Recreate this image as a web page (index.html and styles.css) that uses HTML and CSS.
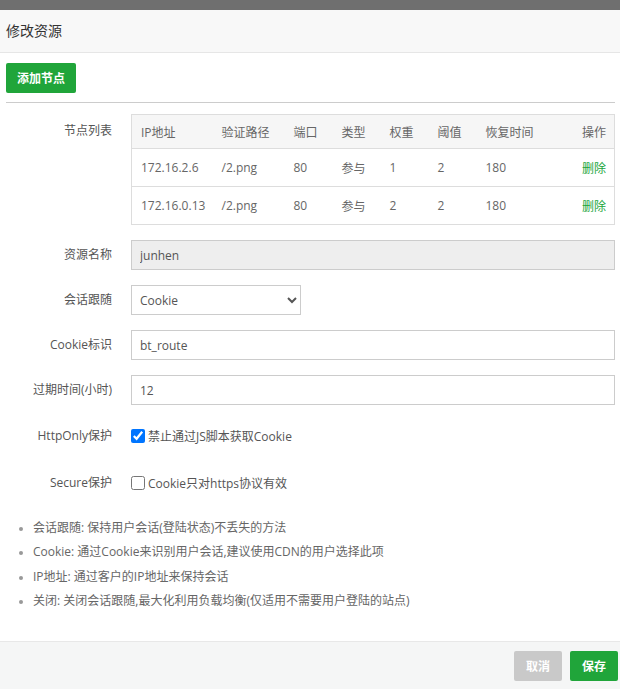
FILE: index.html
```html
<!DOCTYPE html>
<html lang="zh-CN">
<head>
  <meta charset="UTF-8" />
  <meta name="viewport" content="width=device-width, initial-scale=1.0"/>
  <title>修改资源</title>
  <link rel="stylesheet" href="styles.css">
</head>
<body>
  <div class="topbar"></div>
  <div class="dlg-title">修改资源</div>
  <div class="dlg-body">
    <button class="btn btn-green btn-add">添加节点</button>
    <div class="divider"></div>

    <div class="line">
      <span class="tname tname-table">节点列表</span>
      <div class="info-r">
        <table class="node-table">
          <colgroup>
            <col style="width:81px"><col style="width:72px"><col style="width:48px"><col style="width:48px">
            <col style="width:48px"><col style="width:48px"><col style="width:80px"><col>
          </colgroup>
          <thead>
            <tr><th>IP地址</th><th>验证路径</th><th>端口</th><th>类型</th><th>权重</th><th>阈值</th><th>恢复时间</th><th class="op">操作</th></tr>
          </thead>
          <tbody>
            <tr><td>172.16.2.6</td><td>/2.png</td><td>80</td><td>参与</td><td>1</td><td>2</td><td>180</td><td class="op"><a class="del">删除</a></td></tr>
            <tr><td>172.16.0.13</td><td>/2.png</td><td>80</td><td>参与</td><td>2</td><td>2</td><td>180</td><td class="op"><a class="del">删除</a></td></tr>
          </tbody>
        </table>
      </div>
    </div>

    <div class="line">
      <span class="tname">资源名称</span>
      <div class="info-r"><input class="bt-input" type="text" value="junhen" disabled></div>
    </div>

    <div class="line">
      <span class="tname">会话跟随</span>
      <div class="info-r">
        <select class="bt-select">
          <option>Cookie</option>
          <option>IP地址</option>
          <option>关闭</option>
        </select>
      </div>
    </div>

    <div class="line">
      <span class="tname">Cookie标识</span>
      <div class="info-r"><input class="bt-input" type="text" value="bt_route"></div>
    </div>

    <div class="line">
      <span class="tname">过期时间(小时)</span>
      <div class="info-r"><input class="bt-input" type="text" value="12"></div>
    </div>

    <div class="line line-check">
      <span class="tname">HttpOnly保护</span>
      <label class="check"><input type="checkbox" checked> 禁止通过JS脚本获取Cookie</label>
    </div>

    <div class="line line-check">
      <span class="tname">Secure保护</span>
      <label class="check"><input type="checkbox"> Cookie只对https协议有效</label>
    </div>

    <ul class="help">
      <li>会话跟随: 保持用户会话(登陆状态)不丢失的方法</li>
      <li>Cookie: 通过Cookie来识别用户会话,建议使用CDN的用户选择此项</li>
      <li>IP地址: 通过客户的IP地址来保持会话</li>
      <li>关闭: 关闭会话跟随,最大化利用负载均衡(仅适用不需要用户登陆的站点)</li>
    </ul>
  </div>
  <div class="dlg-footer">
    <button class="btn btn-gray">取消</button>
    <button class="btn btn-green">保存</button>
  </div>
</body>
</html>
```

FILE: styles.css
```css
body {
  margin: 0;
  font-family: "Open Sans", "Noto Sans CJK SC", sans-serif;
  font-size: 12px;
  color: #555;
  background: #fff;
  height: 689px;
  display: flex;
  flex-direction: column;
  overflow: hidden;
}
.topbar {
  height: 10px;
  background: #6f6f6f;
}
.dlg-title {
  height: 42px;
  line-height: 42px;
  padding-left: 6px;
  background: #f8f8f8;
  border-bottom: 1px solid #e6e6e6;
  font-size: 14px;
  color: #333;
}
.dlg-body {
  flex: 1;
  padding: 10px 5px 0 6px;
}
.btn {
  height: 30px;
  padding: 0 12px;
  border: none;
  border-radius: 2px;
  font-family: inherit;
  font-size: 12px;
  font-weight: bold;
  color: #fff;
  cursor: pointer;
}
.btn-green {
  background: #20a53a;
}
.btn-gray {
  background: #c9c9c9;
}
.btn-add {
  width: 70px;
  padding: 0;
  display: block;
}
.divider {
  margin-top: 9px;
  border-top: 1px solid #ccc;
  margin-bottom: 11px;
}
.line {
  display: flex;
  align-items: flex-start;
  margin-bottom: 15px;
}
.tname {
  width: 106px;
  flex: none;
  padding-right: 19px;
  text-align: right;
  line-height: 30px;
  color: #555;
}
.tname-table {
  line-height: 34px;
}
.info-r {
  flex: 1;
}
.node-table {
  width: 100%;
  table-layout: fixed;
  border-collapse: collapse;
  border: 1px solid #ddd;
  color: #666;
}
.node-table th {
  height: 33px;
  background: #f6f6f6;
  font-weight: normal;
  text-align: left;
  padding: 0 0 0 9px;
}
.node-table td {
  height: 37px;
  padding: 0 0 0 9px;
  border-top: 1px solid #ddd;
}
.node-table .op {
  text-align: right;
  padding-right: 8px;
}
.del {
  color: #20a53a;
}
.bt-input {
  box-sizing: border-box;
  width: 100%;
  height: 30px;
  border: 1px solid #ccc;
  padding: 0 8px;
  font-family: inherit;
  font-size: 12px;
  color: #555;
  outline: none;
}
.bt-input:disabled {
  background: #eee;
}
.bt-select {
  box-sizing: border-box;
  width: 170px;
  height: 30px;
  border: 1px solid #ccc;
  border-radius: 0;
  padding: 0 4px;
  font-family: inherit;
  font-size: 12px;
  color: #555;
  background: #fff;
}
.line-check {
  height: 32px;
  align-items: center;
}
.line-check .tname {
  line-height: 32px;
}
.check {
  display: flex;
  align-items: center;
  color: #555;
}
.check input {
  margin: 0 3px 0 0;
  width: 14px;
  height: 14px;
}
.help {
  margin: 17px 0 0;
  padding-left: 27px;
  color: #666;
  line-height: 24.3px;
}
.help li::marker {
  color: #999;
  font-size: 10px;
}
.dlg-footer {
  height: 47px;
  flex: none;
  background: #f5f6f6;
  border-top: 1px solid #e8e8e8;
  display: flex;
  justify-content: flex-end;
  align-items: center;
  gap: 8px;
  padding-right: 2px;
}
.dlg-footer .btn {
  width: 48px;
  padding: 0;
}
```
